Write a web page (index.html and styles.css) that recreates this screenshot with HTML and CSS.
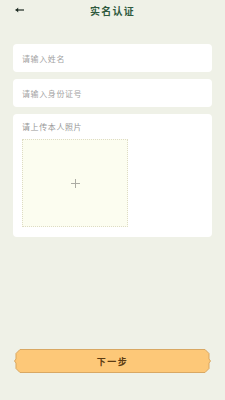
FILE: index.html
```html
<!DOCTYPE html>
<html lang="zh">
<head>
<meta charset="utf-8">
<meta name="viewport" content="width=device-width, initial-scale=1">
<link rel="stylesheet" href="styles.css">
</head>
<body>
<div class="page">
  <header class="header">
    <span class="back">
      <svg width="9" height="6" viewBox="0 0 9 6"><path d="M0.5 3H9" stroke="#1d2b22" stroke-width="1.2"/><path d="M3.2 0.4L0.6 3L3.2 5.6Z" fill="#1d2b22"/></svg>
    </span>
    <h1 class="title">实名认证</h1>
  </header>
  <main class="form">
    <div class="card field">请输入姓名</div>
    <div class="card field">请输入身份证号</div>
    <div class="card upload-card">
      <div class="label">请上传本人照片</div>
      <div class="upload"><span class="plus"></span></div>
    </div>
  </main>
  <div class="footer">
    <button class="next">
      <svg class="next-bg" viewBox="0 0 198 24" preserveAspectRatio="none"><path d="M6 0.5H192L196 4.5V10L197.5 12L196 14V19.5L192 23.5H6L2 19.5V14L0.5 12L2 10V4.5Z" fill="#fdc878" stroke="#d9a862" stroke-width="1"/></svg>
      <span class="next-text">下一步</span>
    </button>
  </div>
</div>
</body>
</html>
```
FILE: styles.css
```css
* { box-sizing: border-box; }
html, body { margin: 0; padding: 0; }
body {
  background: #eff1e7;
  font-family: "Noto Sans CJK SC", "Noto Sans", sans-serif;
}
.page {
  min-height: 400px;
  display: flex;
  flex-direction: column;
  padding: 0 13px 27px;
}
.header {
  height: 22px;
  display: flex;
  align-items: center;
  justify-content: center;
  position: relative;
}
.back {
  position: absolute;
  left: 2px;
  top: 7px;
  display: flex;
}
.title {
  margin: 0;
  font-size: 10px;
  font-weight: 700;
  letter-spacing: 1.2px;
  color: #2f5a3e;
  line-height: 1;
}
.form {
  margin-top: 22px;
  display: flex;
  flex-direction: column;
  gap: 7px;
}
.card {
  background: #ffffff;
  border-radius: 4px;
}
.field {
  height: 28px;
  display: flex;
  align-items: center;
  padding-left: 9px;
  font-size: 8px;
  letter-spacing: 0.6px;
  color: #a3a3a3;
}
.upload-card {
  height: 123px;
  padding: 8px 9px 0;
}
.label {
  font-size: 8px;
  letter-spacing: 0.6px;
  color: #969696;
  line-height: 10px;
}
.upload {
  margin-top: 7px;
  width: 106px;
  height: 88px;
  background: #fcfdf0;
  border: 1px dotted #dedcc4;
  display: flex;
  align-items: center;
  justify-content: center;
}
.plus {
  width: 9px;
  height: 9px;
  background:
    linear-gradient(#acaca4, #acaca4) center / 9px 1px no-repeat,
    linear-gradient(#acaca4, #acaca4) center / 1px 9px no-repeat;
}
.footer {
  margin-top: auto;
  padding: 0 1px 0 1px;
}
.next {
  position: relative;
  width: 197px;
  height: 24px;
  padding: 0;
  border: 0;
  background: transparent;
  display: flex;
  align-items: center;
  justify-content: center;
  font-family: inherit;
}
.next-bg {
  position: absolute;
  inset: 0;
  width: 100%;
  height: 100%;
}
.next-text {
  position: relative;
  font-size: 9px;
  font-weight: 700;
  letter-spacing: 1.5px;
  color: #5b3b12;
}
```
